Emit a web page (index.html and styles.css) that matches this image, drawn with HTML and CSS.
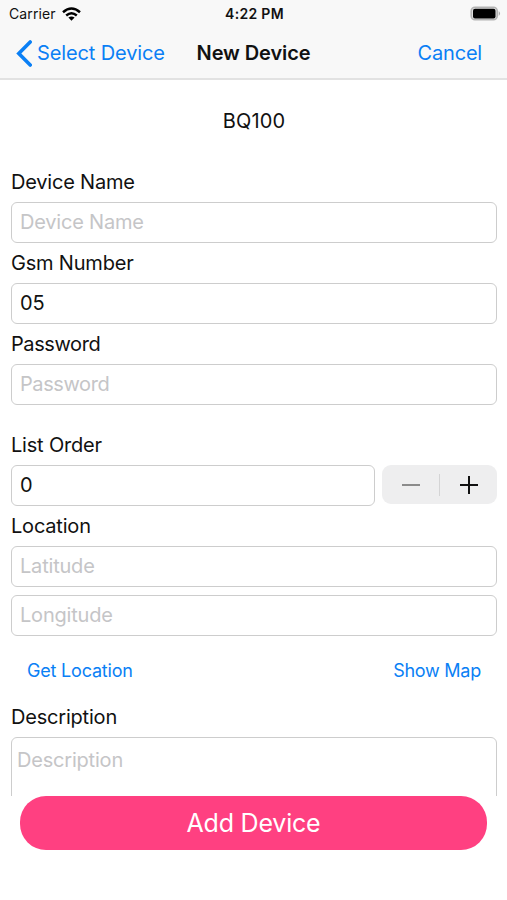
FILE: index.html
```html
<!DOCTYPE html>
<html lang="en">
<head>
<meta charset="utf-8">
<title>New Device</title>
<link rel="stylesheet" href="styles.css">
</head>
<body>
<header class="top">
  <div class="status">
    <div class="carrier"><span class="carrier-name">Carrier</span>
      <svg class="wifi" width="19" height="14" viewBox="0 0 19 14"><g fill="none" stroke="#000" stroke-width="2.5"><path d="M1 5.2Q9.500-2.200 18 5.200"/><path d="M4.200 8.500Q9.500 4 14.800 8.500"/></g><path d="M6.400 10.600Q9.500 8.200 12.600 10.600L9.500 13.800Z"/></svg>
    </div>
    <span class="time">4:22 PM</span>
    <svg class="battery" width="31" height="15" viewBox="0 0 31 15"><rect x="1.200" y="1.200" width="26" height="12.600" rx="3.800" fill="#dedede" stroke="#b3b3b3" stroke-width="1.600"/><rect x="3" y="2.800" width="22.500" height="9.600" rx="2"/><path d="M28.700 5q2.600 2.500 0 5z" fill="#aaa"/></svg>
  </div>
  <nav class="nav">
    <a class="back"><svg width="16" height="27" viewBox="0 0 16 27"><path d="M14.200 2L2.800 13.500L14.200 25" fill="none" stroke="#0a7ff5" stroke-width="3.600" stroke-linecap="round"/></svg><span class="back-text">Select Device</span></a>
    <h1 class="title">New Device</h1>
    <a class="cancel">Cancel</a>
  </nav>
</header>
<main class="form">
  <p class="model">BQ100</p>
  <label class="label">Device Name</label>
  <div class="field hint">Device Name</div>
  <label class="label">Gsm Number</label>
  <div class="field">05</div>
  <label class="label tight">Password</label>
  <div class="field hint tight">Password</div>
  <label class="label spaced">List Order</label>
  <div class="order">
    <div class="field">0</div>
    <div class="stepper"><i class="minus"></i><i class="divider"></i><i class="plus"></i></div>
  </div>
  <label class="label">Location</label>
  <div class="field hint">Latitude</div>
  <div class="field hint second">Longitude</div>
  <div class="links"><a>Get Location</a><a class="map">Show Map</a></div>
  <label class="label desc">Description</label>
  <div class="area hint">Description</div>
</main>
<button class="add">Add Device</button>
</body>
</html>
```
FILE: styles.css
```css
* { box-sizing: border-box; }
body { margin: 0; height: 900px; overflow: hidden; background: #fff; color: #111; font: 20px/24px Inter, "Liberation Sans", sans-serif; letter-spacing: -.2px; }
.top { height: 80px; background: #f8f8f8; border-bottom: 2px solid #e2e2e2; }
.status { height: 27px; display: grid; grid-template-columns: 1fr auto 1fr; align-items: center; padding: 0 6px 0 9px; font-size: 14px; }
.carrier { display: flex; gap: 6px; align-items: center; letter-spacing: .1px; }
.time { font-weight: 600; letter-spacing: .3px; margin-right: 1px; }
.battery { justify-self: end; }
.nav { height: 52px; display: grid; grid-template-columns: 1fr auto 1fr; align-items: center; padding: 0 25px 0 16px; color: #0a7ff5; }
.back { display: flex; align-items: center; gap: 5px; white-space: nowrap; letter-spacing: -.12px; }
.title { margin: 0 0 0 9px; color: #111; font-size: 20px; font-weight: 600; letter-spacing: -.1px; }
.cancel { justify-self: end; }
.form { height: 716px; overflow: hidden; padding: 29px 10px 0 11px; }
.model { height: 24px; margin: 0 0 29px; text-align: center; letter-spacing: .2px; }
.label { display: block; height: 40px; padding-top: 8px; }
.field { height: 41px; border: 1px solid #cdcdcd; border-radius: 6px; padding: 7px 8px; }
.hint { color: #c5c5c7; }
.tight { letter-spacing: -.4px; }
.spaced { height: 60px; padding-top: 28px; }
.order { display: grid; grid-template-columns: 1fr 115px; gap: 7px; }
.stepper { height: 39px; border-radius: 9px; background: #eeeeef; display: grid; grid-template-columns: 1fr 1px 1fr; align-items: center; justify-items: center; }
.divider { width: 1px; height: 22px; background: #d4d4d5; }
.minus { width: 18px; height: 2px; background: #8b8b8b; }
.plus { width: 18px; height: 18px; background: linear-gradient(#111,#111) center/18px 2px no-repeat, linear-gradient(#111,#111) center/2px 18px no-repeat; }
.second { margin-top: 8px; }
.links { display: flex; justify-content: space-between; padding: 23px 16px 0; color: #0a7ff5; font-size: 18px; }
.map { letter-spacing: -.25px; }
.desc { padding-top: 22px; height: 54px; }
.area { height: 80px; border: 1px solid #cdcdcd; border-radius: 6px; padding: 10px 5px; }
.add { display: block; width: 467px; height: 54px; margin: 0 20px; border: 0; border-radius: 26px; background: #ff4081; color: #fff; font: 25px/54px Inter, "Liberation Sans", sans-serif; letter-spacing: -.2px; padding: 0; }
```
